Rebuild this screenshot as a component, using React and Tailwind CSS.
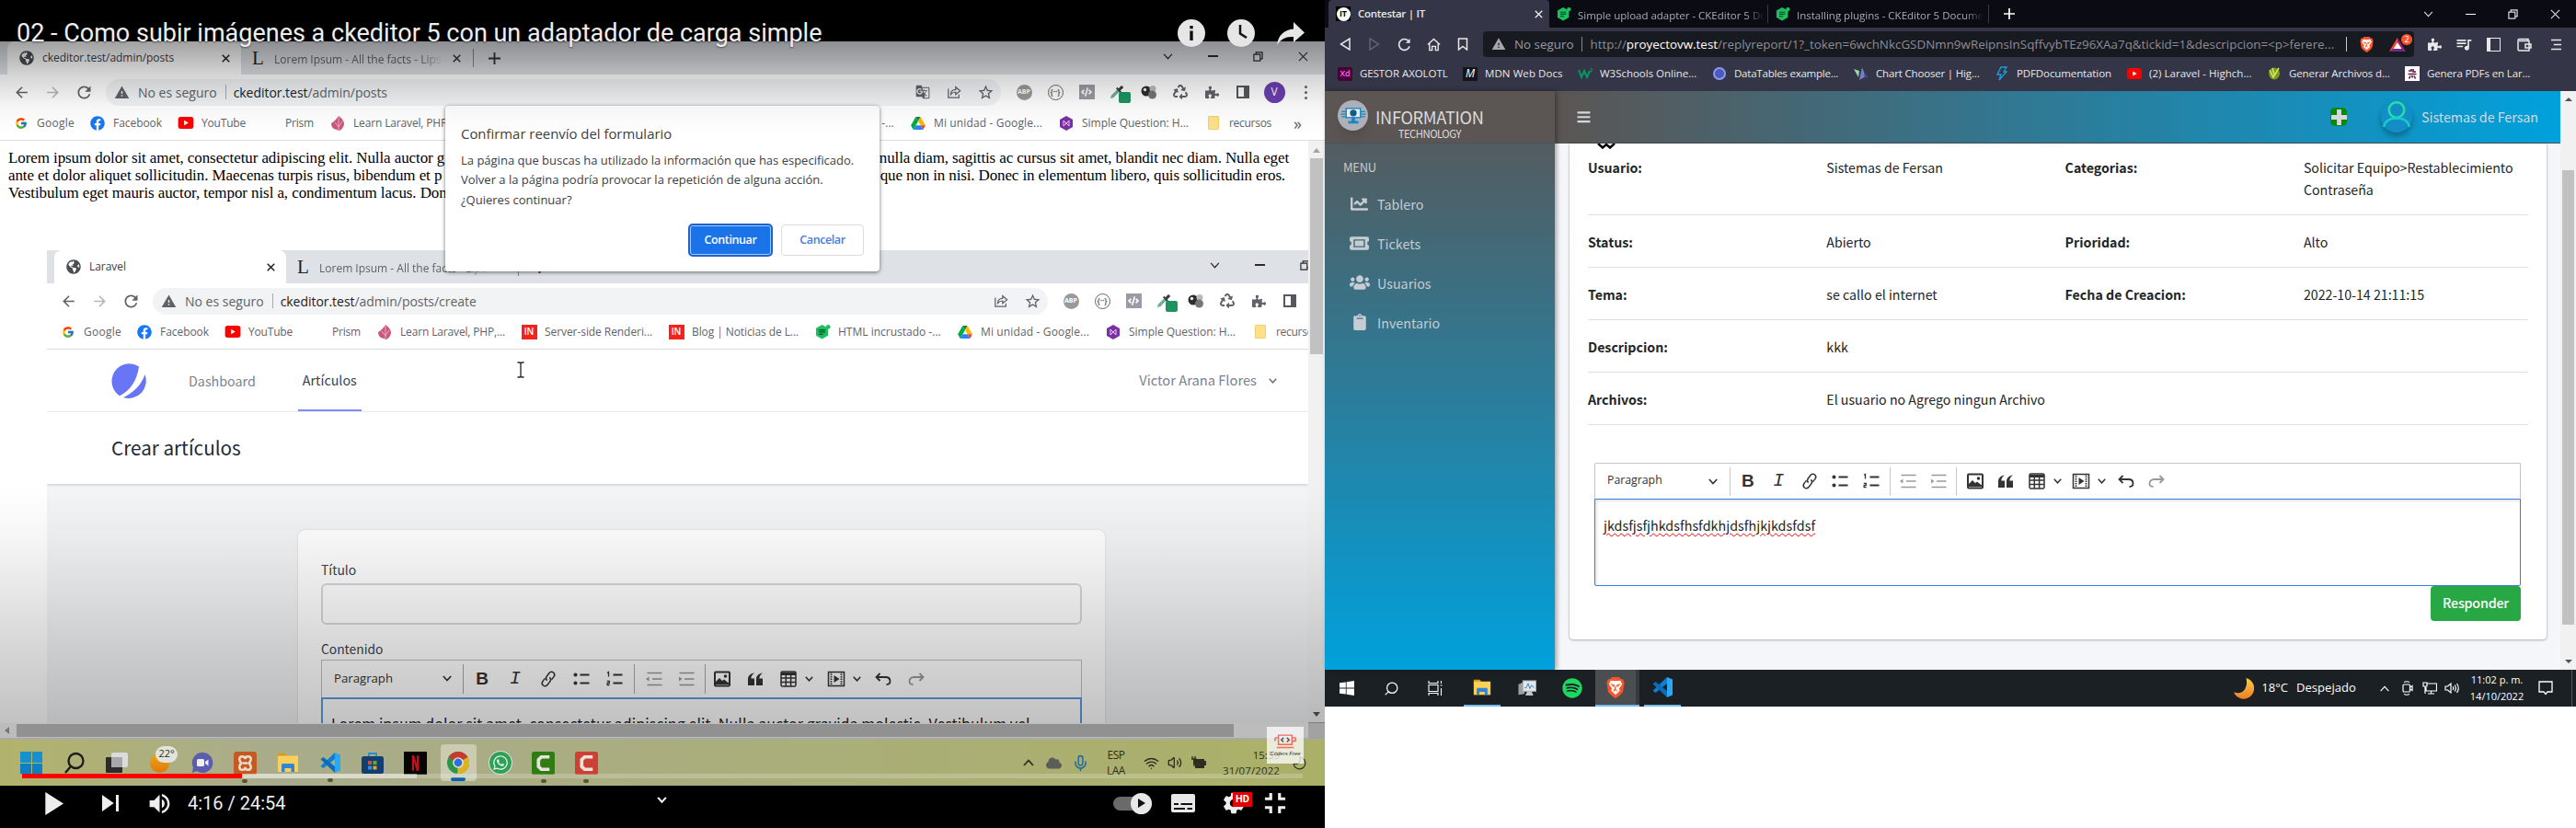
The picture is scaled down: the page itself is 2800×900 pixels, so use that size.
import React from "react";
import {
  FaGlobeAmericas, FaPuzzlePiece, FaRecycle, FaFacebook, FaChartLine, FaUsers, FaClipboard, FaSpotify,
  FaWhatsapp, FaCode, FaEyeDropper, FaCloud,
} from "react-icons/fa";
import { FcGoogle } from "react-icons/fc";
import {
  MdArrowBack, MdArrowForward, MdRefresh, MdWarning, MdSkipNext, MdPlayArrow, MdVolumeUp, MdSettings,
  MdFullscreenExit, MdGTranslate, MdStarBorder, MdOutlineQueueMusic,
} from "react-icons/md";
import { Wifi, Volume2, Mic, Search, Moon } from "lucide-react";

const SEGOE = "font-['Open_Sans','Noto_Sans',sans-serif]";
const SOURCE = "font-['Noto_Sans_CJK_JP','Noto_Sans',sans-serif]";

function T({ c = "", children }) {
  return <span className={`inline-block shrink-0 whitespace-nowrap ${c}`}>{children}</span>;
}

function Box({ c = "", children }) {
  return <div className={`flex shrink-0 items-center justify-center ${c}`}>{children}</div>;
}

/* ---------- small drawings ---------- */

const Chevron = ({ c = "", up = false, sw = 1.6 }) => (
  <svg viewBox="0 0 12 8" className={c} fill="none" stroke="currentColor" strokeWidth={sw}>
    <path d={up ? "M1 7 6 1.5 11 7" : "M1 1 6 6.5 11 1"} />
  </svg>
);
const Close = ({ c = "", sw = 2 }) => (
  <svg viewBox="0 0 12 12" className={c} stroke="currentColor" strokeWidth={sw}><path d="M1 1 11 11M11 1 1 11" /></svg>
);
const Plus = ({ c = "", sw = 2 }) => (
  <svg viewBox="0 0 14 14" className={c} stroke="currentColor" strokeWidth={sw}><path d="M7 0V14M0 7H14" /></svg>
);
const Restore = ({ c = "" }) => (
  <svg viewBox="0 0 12 12" className={c} fill="none" stroke="currentColor" strokeWidth="1.3">
    <path d="M1 3.5H8.5V11H1ZM3.5 3.5V1H11V8.5H8.5" />
  </svg>
);
const ShareBox = ({ c = "" }) => (
  <svg viewBox="0 0 18 18" className={c} fill="none" stroke="currentColor" strokeWidth="1.4">
    <path d="M2 5V16H15V12" /><path d="M11 3V6C7 6 5 9 5 12 7 9.500 9 9 11 9V12L16.500 7.500Z" />
  </svg>
);
const HexDoc = ({ c = "" }) => (
  <svg viewBox="0 0 18 18" className={c}>
    <path d="M8 1 15 5V13.500L8 17.500 1 13.500V5Z" fill="#1bc05e" />
    <circle cx="15" cy="3.500" r="2.500" fill="#1bc05e" />
    <path d="M4.500 7H11.500M4.500 9.500H11.500M4.500 12H9" stroke="#0b4a2a" strokeWidth="1.300" />
  </svg>
);
const YouTube = ({ c = "" }) => (
  <svg viewBox="0 0 18 14" className={c}><rect width="18" height="14" rx="3" fill="#f00" /><path d="M7 4 12 7 7 10Z" fill="#fff" /></svg>
);
const VsCode = ({ c = "" }) => (
  <svg viewBox="0 0 24 24" className={c}>
    <path d="M17 1 23 3.500V20.500L17 23Z" fill="#2aa8f2" />
    <path d="M17 1V8L4.500 18 1.500 15.800Z" fill="#0d7fd0" /><path d="M17 23V16L4.500 6 1.500 8.200Z" fill="#0b6cba" />
  </svg>
);
const Folder = ({ c = "" }) => (
  <svg viewBox="0 0 24 24" className={c}>
    <path d="M1 2H9L11 5H1Z" fill="#d89a1a" /><path d="M1 4.500H23V22H1Z" fill="#fbcf58" />
    <path d="M5 22V14.500Q5 13 6.500 13H17.500Q19 13 19 14.500V22H15.500V18H8.500V22Z" fill="#2f86d6" />
  </svg>
);
const Brave = ({ c = "" }) => (
  <svg viewBox="0 0 20 24" className={c}>
    <path d="M6 0H14L16 2.200 18.500 2.500 20 6 18.500 16Q17 20 10 24 3 20 1.500 16L0 6 1.500 2.500 4 2.200Z" fill="#fb542b" />
    <path d="M10 4.500 15.500 4 17.500 8 14 13 15 15.500 10 20 5 15.500 6 13 2.500 8 4.500 4Z" fill="#fff" />
    <path d="M5 8 8.500 9 8 11ZM15 8 11.500 9 12 11ZM10 10V14.500L7.500 16M10 14.500 12.500 16" fill="#fb542b" stroke="#fb542b" strokeWidth=".9" />
  </svg>
);
const Drive = ({ c = "" }) => (
  <svg viewBox="0 0 18 16" className={c}>
    <path d="M6 0H12L9 5.300Z" fill="#188038" /><path d="M6 0 0 10.500 3 16 9 5.300Z" fill="#00ac47" />
    <path d="M12 0 18 10.500H12L9 5.300Z" fill="#ffba00" /><path d="M3 16 6 10.500H12L15 16Z" fill="#2684fc" /><path d="M12 10.500H18L15 16Z" fill="#ea4335" />
  </svg>
);

/* ---------- rich-text toolbar ---------- */

const ck = {
  link: <path d="M8.500 11.500C7 10 7.300 8.500 8.500 7L11.500 3.800C13 2.300 15 2.300 16.300 3.600 17.600 5 17.500 6.800 16.200 8.300L13.500 11M11.500 8.500C13 10 12.800 11.600 11.500 13L8.500 16.200C7 17.700 5 17.700 3.700 16.400 2.400 15 2.500 13.200 3.800 11.700L6.500 9" transform="rotate(-6 10 10)" />,
  bullets: <><path d="M8.500 5.500H18.500M8.500 14.500H18.500" strokeWidth="1.800" /><circle cx="3.500" cy="5.500" r="1.300" fill="currentColor" /><circle cx="3.500" cy="14.500" r="1.300" fill="currentColor" /></>,
  numbers: <><path d="M8.500 5.500H18.500M8.500 14.500H18.500" strokeWidth="1.800" /><path d="M2 3.500 3.500 2.500V7.500M1.800 12.300H4.300V14.300H2.200V16.500H4.600" strokeWidth="1.300" /></>,
  outdent: <><path d="M2.500 3.500H18.500M8 10H18.500M2.500 16.500H18.500" /><path d="M1 10 4.500 7.500V12.500Z" fill="currentColor" stroke="none" /></>,
  indent: <><path d="M2.500 3.500H18.500M8 10H18.500M2.500 16.500H18.500" /><path d="M5.500 10 2 7.500V12.500Z" fill="currentColor" stroke="none" /></>,
  image: <><rect x="2" y="2.500" width="16" height="15" rx="1" strokeWidth="2" /><path d="M3 16V13L7 9 10 12 12 10.500 17 14.500V16Z" fill="currentColor" stroke="none" /><circle cx="13.500" cy="7" r="1.800" fill="currentColor" stroke="none" /></>,
  quote: <path d="M9 3.500C6.500 5 5.500 7 5.300 9.500H9V17H2V10.500C2 6.500 4.500 4 9 3.500ZM18 3.500C15.500 5 14.500 7 14.300 9.500H18V17H11V10.500C11 6.500 13.500 4 18 3.500Z" fill="currentColor" stroke="none" />,
  table: <><rect x="2" y="2" width="16" height="16" rx="1.500" /><path d="M2 4H18M2 9H18M2 13.500H18M7.300 5V18M12.600 5V18" /><path d="M2 3H18V6H2Z" fill="currentColor" stroke="none" /></>,
  media: <><rect x="1.500" y="2.500" width="17" height="15" strokeWidth="1.500" /><path d="M4.500 2V18M15.500 2V18" strokeWidth="1.800" strokeDasharray="1.500 1" /><path d="M7.500 6 13.500 10 7.500 14Z" fill="currentColor" stroke="none" /></>,
  undo: <path d="M6.500 4 2.500 8 6.500 12M3 8H12.500C16 8 17.500 10 17.500 12.500 17.500 14.500 16 16 13.500 16" strokeWidth="1.800" />,
  redo: <path d="M13.500 4 17.500 8 13.500 12M17 8H7.500C4 8 2.500 10 2.500 12.500 2.500 14.500 4 16 6.500 16" strokeWidth="1.800" />,
};
const Ck = ({ n, c = "" }) => (
  <svg viewBox="0 0 20 20" className={`size-5 ${c}`} fill="none" stroke="currentColor" strokeWidth="1.500">{ck[n]}</svg>
);

function EditorToolbar({ big = false }) {
  const cell = big ? "w-[36px]" : "w-[33.500px]";
  const dd = big ? "w-[16px] pr-2" : "w-[15px] pr-1";
  const sep = big ? "h-8 w-px bg-[#a8a8a8]" : "h-[31px] w-px bg-[#c8c8c8]";
  return (
    <div className={`flex h-full items-center text-[#333] ${SEGOE}`}>
      <div className={`flex items-center justify-between ${big ? "w-[153px] pl-[13px] pr-3" : "w-[146px] pl-[13px] pr-[13px]"}`}>
        <T c={big ? "pb-px text-[13.200px]" : "pb-px text-[12.300px]"}>Paragraph</T>
        <Chevron c="h-[7px] w-2.5" sw={2} />
      </div>
      <div className={sep} />
      <Box c={`${cell} ml-0.5`}><span className="font-['Liberation_Sans',sans-serif] text-[19px] font-bold">B</span></Box>
      <Box c={cell}><span className="font-['Liberation_Mono',monospace] text-[20px] italic">I</span></Box>
      <Box c={cell}><Ck n="link" /></Box>
      <Box c={cell}><Ck n="bullets" /></Box>
      <Box c={cell}><Ck n="numbers" /></Box>
      <div className={`${sep} ml-[3px]`} />
      <Box c={`${cell} ml-[3px] text-[#999]`}><Ck n="outdent" /></Box>
      <Box c={`${big ? "w-[34px]" : "w-[32px]"} text-[#999]`}><Ck n="indent" /></Box>
      <div className={`${sep} ml-[3px]`} />
      <Box c={`${cell} ${big ? "" : "ml-[3px]"}`}><Ck n="image" /></Box>
      <Box c={cell}><Ck n="quote" /></Box>
      <Box c={cell}><Ck n="table" /></Box>
      <Box c={dd}><Chevron c="h-[6px] w-[9px] shrink-0" sw={2} /></Box>
      <Box c={cell}><Ck n="media" /></Box>
      <Box c={dd}><Chevron c="h-[6px] w-[9px] shrink-0" sw={2} /></Box>
      <Box c={`${cell} ${big ? "-ml-px" : ""}`}><Ck n="undo" /></Box>
      <Box c={`${cell} text-[#999]`}><Ck n="redo" /></Box>
    </div>
  );
}

/* ---------- light browser ---------- */

const IN = () => <div className="flex h-4 w-[17px] items-center justify-center bg-[#f4221b] text-[10px] font-semibold text-white">IN</div>;

const marks = [
  { s: "w-[83px] tracking-[0.26px]", t: "Google", i: <FcGoogle className="size-[14px]" /> },
  { s: "w-[96px] tracking-[-0.05px]", t: "Facebook", i: <FaFacebook className="size-4 text-[#1877f2]" /> },
  { s: "w-[91px] tracking-[-0.19px]", t: "YouTube", i: <YouTube c="h-[13px] w-[18px]" /> },
  { s: "w-[74px] tracking-[-0.2px]", t: "Prism", i: null },
  { s: "w-[157px] tracking-[-0.15px]", t: "Learn Laravel, PHP,...", i: <svg viewBox="0 0 14 16" className="h-4 w-3.5"><path d="M8 0Q14 4 14 9 13 14 9 16L3 14Q0 12 0 8 4 6 8 0Z" fill="#c9587f" /><path d="M8 1V15M4 7 8 12 12 6" stroke="#f0aac0" fill="none" /></svg> },
  { s: "w-[160px] tracking-[-0.07px]", t: "Server-side Renderi...", i: <IN /> },
  { s: "w-[159px] tracking-[-0.09px]", t: "Blog | Noticias de L...", i: <IN /> },
  { s: "w-[155px]", t: "HTML incrustado -...", i: <HexDoc c="size-[17px]" /> },
  { s: "w-[161px] tracking-[0.14px]", t: "Mi unidad - Google...", i: <Drive c="h-[14px] w-4" /> },
  { s: "w-[160px] tracking-[-0.03px]", t: "Simple Question: H...", i: <svg viewBox="0 0 16 16" className="size-4"><path d="M8 0 15 4V12L8 16 1 12V4Z" fill="#7b2fa5" /><path d="M5 5 8 8 11 5M5 11 8 8 11 11M5 5V11M11 5V11" stroke="#e9c9f7" fill="none" /></svg> },
  { s: "w-[96px] tracking-[-0.29px]", t: "recursos", i: <div className="h-[15px] w-3 rounded-[1px] border border-[#f0cf73] bg-[#ffe08a]" /> },
];

function LightBrowser({ title, path, tab, translate }) {
  return (
    <div className={`w-[1440px] shrink-0 text-[#5f6368] ${SEGOE}`}>
      <div className="flex h-9 items-center bg-[#dee1e6]">
        <div className={`ml-2 flex h-9 items-center rounded-t-lg bg-white pl-[13px] pr-3 text-[#3c4043] ${tab}`}>
          <FaGlobeAmericas className="size-4 shrink-0 text-[#4b4f54]" />
          <T c="ml-[9px] text-[12px] tracking-[-0.05px]">{title}</T>
          <Close c="ml-auto size-[9px] text-[#222]" />
        </div>
        <div className="flex h-9 w-[252px] items-center">
          <span className="ml-3 w-6 shrink-0 font-['Liberation_Serif',serif] text-[21px] leading-none text-[#222]">L</span>
          <div className="w-[184px] overflow-hidden [mask-image:linear-gradient(to_right,#000_86%,transparent)]">
            <T c="text-[12px]">Lorem Ipsum - All the facts - Lips</T>
          </div>
          <Close c="ml-2.5 size-[9px] shrink-0 text-[#333]" />
        </div>
        <div className="h-5 w-px bg-[#85888d]" />
        <Plus c="ml-4 size-[13px] text-[#333]" />
        <div className="-mr-px mb-1 ml-auto flex text-[#2b2b2b]">
          <Box c="w-[49px]"><Chevron c="h-[7px] w-[11px]" sw={1.5} /></Box>
          <Box c="w-[49px]"><div className="h-[1.500px] w-[11px] bg-current" /></Box>
          <Box c="w-[49px]"><Restore c="size-[11px]" /></Box>
          <Box c="w-[49px]"><Close c="size-[11px]" sw={1.2} /></Box>
        </div>
      </div>
      <div className="flex h-[38px] items-center bg-white pl-[6px]">
        <Box c="w-[34px]"><MdArrowBack className="size-[19px]" /></Box>
        <Box c="w-[34px] text-[#b4b6b9]"><MdArrowForward className="size-[19px]" /></Box>
        <Box c="w-[34px]"><MdRefresh className="size-[21px]" /></Box>
        <div className="ml-[7px] flex h-[29px] w-[973px] items-center rounded-full bg-[#f1f3f4]">
          <Box c="w-[35px]"><MdWarning className="size-[17px]" /></Box>
          <T c="text-[14px]">No es seguro</T>
          <div className="ml-[9px] mr-2 h-4 w-px bg-[#a9abae]" />
          <T c="text-[14px] tracking-[-0.04px]"><span className="text-[#202124]">ckeditor.test</span>{path}</T>
          <div className="ml-auto flex">
            {translate && <Box c="w-[34px]"><MdGTranslate className="size-4" /></Box>}
            <Box c="w-[34px]"><ShareBox c="size-4" /></Box>
            <Box c="w-[34px]"><MdStarBorder className="size-[19px]" /></Box>
          </div>
        </div>
        <div className="ml-2 flex">
          <Box c="w-[34px]"><div className="flex size-[17px] items-center justify-center rounded-full bg-[#999] text-[7px] font-bold text-white">ABP</div></Box>
          <Box c="w-[34px]"><div className="flex size-[17px] items-center justify-center rounded-full border-[1.500px] border-[#666] text-[8px] font-bold leading-none">{"{··}"}</div></Box>
          <Box c="w-[34px]"><div className="flex h-4 w-[17px] items-center justify-center bg-[#9a9ba3] text-white"><FaCode className="size-3" /></div></Box>
          <Box c="relative w-[34px]">
            <svg viewBox="0 0 18 18" className="mr-1 size-[17px]"><path d="M2 16 3 12.500 10 5.500 12.500 8 5.500 15Z" fill="#6fae93" /><path d="M8.500 4.500 10 3 11.500 4.500 14 1.500Q16.500 .5 17 3.500L13.500 7 15 8.500 13.500 10Z" fill="#3b3d40" /></svg>
            <div className="absolute left-[18px] top-[11px] h-3 w-[13px] rounded-[2px] bg-[#1f9461]" />
          </Box>
          <Box c="w-[34px]"><svg viewBox="0 0 18 16" className="h-4 w-[18px]"><circle cx="6" cy="7" r="5.500" fill="#2d2d2d" /><circle cx="4.500" cy="5.500" r="1.700" fill="#eee" /><circle cx="13" cy="4.500" r="3.500" fill="#bbb" /><circle cx="12.500" cy="11" r="4.500" fill="#777" /></svg></Box>
          <Box c="w-[34px]"><FaRecycle className="size-4" /></Box>
          <Box c="w-[34px]"><FaPuzzlePiece className="size-[15px]" /></Box>
          <Box c="w-[34px]"><div className="size-[14px] border-2 border-r-[6px] border-[#55585c]" /></Box>
          <Box c="w-[34px]"><div className="flex size-[23px] items-center justify-center rounded-full bg-[#6b3fb0] text-[12px] text-white">V</div></Box>
          <Box c="w-[34px] flex-col gap-[3px]"><i className="size-[3px] rounded-full bg-current" /><i className="size-[3px] rounded-full bg-current" /><i className="size-[3px] rounded-full bg-current" /></Box>
        </div>
      </div>
      <div className="flex h-[34px] items-center border-b border-[#dcdcdc] bg-white pb-1 pl-3.5">
        {marks.map((m) => (
          <div key={m.t} className={`flex shrink-0 items-center ${m.s}`}>
            <Box c="mr-2 w-[18px]">{m.i}</Box>
            <T c="text-[12px]">{m.t}</T>
          </div>
        ))}
        <span className="text-[18px] leading-none">»</span>
      </div>
    </div>
  );
}

/* ---------- video player ---------- */

function ArticlePage() {
  return (
    <div className="ml-[51px] h-[514px] w-[1371px] overflow-hidden bg-[#f3f4f6]">
      <LightBrowser title="Laravel" path="/admin/posts/create" tab="w-[252px]" />
      <div className={`flex h-[68px] w-[1371px] items-center border-b border-[#eef0f2] bg-white pl-[70px] ${SOURCE}`}>
        <svg viewBox="0 0 38 38" className="size-[38px]">
          <path d="M30 3.500A19 19 0 1 0 9 35.200C20 30 28 19 30 3.500Z" fill="#6875f5" /><path d="M36.500 12A19 19 0 0 1 13 37C24 32 33 23 36.500 12Z" fill="#6875f5" />
        </svg>
        <T c="ml-[46px] text-[14.300px] text-[#7b8290]">Dashboard</T>
        <div className="ml-[46px] flex h-full w-[69px] items-center justify-center border-b-2 border-[#818cf8]">
          <T c="text-[14.300px] text-[#3a414d]">Artículos</T>
        </div>
        <T c="ml-auto text-[14.700px] text-[#7b8290]">Victor Arana Flores</T>
        <Chevron c="ml-[13px] mr-[34px] h-[6px] w-[9px] text-[#6b7280]" sw={2} />
      </div>
      <div className={`flex h-[78px] items-center bg-white pl-[70px] shadow-[0_1px_3px_rgba(0,0,0,.18)] ${SOURCE}`}>
        <T c="text-[20.700px] text-[#1f2937]">Crear artículos</T>
      </div>
      <div className={`ml-[273px] mt-[50px] h-[230px] w-[877px] rounded-t-lg bg-white px-[25px] pt-[30px] shadow-[0_0_3px_rgba(0,0,0,.12)] ${SOURCE}`}>
        <div className="h-[28px]"><T c="text-[13.900px] leading-[22px] text-[#374151]">Título</T></div>
        <div className="h-[45px] rounded-md border-2 border-[#d5d7db]" />
        <div className="h-[38px] pt-[13px]"><T c="text-[13.800px] leading-[22px] text-[#374151]">Contenido</T></div>
        <div className="h-[41px] border border-b-0 border-[#bfbfbf]"><EditorToolbar big /></div>
        <div className="h-[60px] border-2 border-[#5a9be0] pl-[9px] pt-[14px]">
          <T c="text-[16px] leading-5 tracking-[0.07px] text-[#222]">Lorem ipsum dolor sit amet, consectetur adipiscing elit. Nulla auctor gravida molestie. Vestibulum vel</T>
        </div>
      </div>
    </div>
  );
}

function ResubmitDialog() {
  return (
    <div className={`absolute left-[484px] top-[115px] flex h-[180px] w-[472px] flex-col rounded bg-white px-[17px] pt-[20px] text-[#3c4043] shadow-[0_1px_4px_rgba(0,0,0,.55)] ${SEGOE}`}>
      <T c="text-[14.900px] leading-5">Confirmar reenvío del formulario</T>
      <div className="mt-[9px] flex flex-col items-start text-[13px] leading-[21.300px]">
        <T>La página que buscas ha utilizado la información que has especificado.</T>
        <T>Volver a la página podría provocar la repetición de alguna acción.</T>
        <T>¿Quieres continuar?</T>
      </div>
      <div className="ml-auto mt-[15px] flex items-center gap-[9px] text-[12.500px] font-semibold tracking-[-0.4px]">
        <div className="flex h-9 w-[92px] items-center justify-center rounded-[5px] border-2 border-[#1a63d0] bg-[#1a73e8] text-white shadow-[inset_0_0_0_1px_#a9c8f5]"><T>Continuar</T></div>
        <div className="flex h-[34px] w-[90px] items-center justify-center rounded border border-[#dadce0] text-[#4a7be0]"><T>Cancelar</T></div>
      </div>
    </div>
  );
}

function Win11Taskbar() {
  const cell = "w-[46.400px] relative";
  const dot = <div className="absolute -bottom-[9px] h-1 w-[6px] rounded-full bg-[#55582f]" />;
  return (
    <div className={`flex h-[50px] items-center bg-linear-to-r/srgb from-[#b1b36c] via-[#a9ac8b] via-20% to-[#abb068] pl-[11px] text-[#2c2e20] ${SEGOE}`}>
      <Box c={cell}><div className="grid size-6 grid-cols-2 gap-px"><i className="bg-[#1691cf]" /><i className="bg-[#1691cf]" /><i className="bg-[#0b80c4]" /><i className="bg-[#0b80c4]" /></div></Box>
      <Box c={cell}><svg viewBox="0 0 24 24" className="size-6" fill="none" stroke="#1c1c1c" strokeWidth="2.300"><circle cx="13.500" cy="10" r="8" /><path d="M8 16 2 23" /></svg></Box>
      <Box c={cell}><svg viewBox="0 0 26 24" className="h-6 w-[26px]"><rect x="7" y="1" width="18" height="16" rx="2" fill="#dcdcdc" /><rect x="1" y="6" width="18" height="17" rx="1" fill="#2c2c2e" /><rect x="7" y="6" width="12" height="11" fill="#a8a8aa" /></svg></Box>
      <Box c={cell}>
        <div className="size-[21px] rounded-full bg-linear-to-b from-[#f2a617] to-[#d97a0c]" />
        <div className="absolute -top-[8px] left-[19px] flex h-[18px] w-6 items-center justify-center rounded-full bg-[#e4e4dc] text-[11px]">22°</div>
      </Box>
      <Box c={cell}><svg viewBox="0 0 24 24" className="size-6"><path d="M12 1A11 11 0 1 1 6 21L1 23 2 17A11 11 0 0 1 12 1Z" fill="#5a5cae" /><rect x="6" y="8" width="8" height="8" rx="1.500" fill="#eee" /><path d="M15 11 18.500 8.500V15.500L15 13Z" fill="#eee" /></svg></Box>
      <Box c={cell}><svg viewBox="0 0 24 24" className="size-[25px]"><rect width="24" height="24" rx="3" fill="#c25a21" /><path d="M12 8Q12 5 9 5 6 5 6 8 6 10 8 12 6 14 6 16 6 19 9 19 12 19 12 16 12 19 15 19 18 19 18 16 18 14 16 12 18 10 18 8 18 5 15 5 12 5 12 8M9.500 12H14.500" fill="none" stroke="#ecdccd" strokeWidth="2.400" /></svg>{dot}</Box>
      <Box c={cell}><Folder c="h-6 w-[26px]" /></Box>
      <Box c={cell}><VsCode c="size-6" />{dot}</Box>
      <Box c={cell}><svg viewBox="0 0 24 24" className="size-6"><path d="M8 6V2H16V6" fill="none" stroke="#2a8fd0" strokeWidth="1.800" /><rect y="5" width="24" height="19" rx="2.500" fill="#123f70" /><path d="M7 10H11V14H7Z" fill="#d5502f" /><path d="M12.500 10H16.500V14H12.500Z" fill="#6da534" /><path d="M7 15.500H11V19.500H7Z" fill="#2a93d4" /><path d="M12.500 15.500H16.500V19.500H12.500Z" fill="#dba822" /></svg></Box>
      <Box c={cell}><svg viewBox="0 0 24 24" className="size-[25px]"><rect width="24" height="24" fill="#050505" /><path d="M9.500 20V4L14.500 20V4" fill="none" stroke="#c11119" strokeWidth="2.200" /></svg></Box>
      <Box c={cell}>
        <div className="flex h-10 w-[39px] items-center justify-center rounded bg-[#c9ccb1]">
          <svg viewBox="0 0 24 24" className="size-6"><circle cx="12" cy="12" r="12" fill="#2d9548" /><path d="M12 12 1.600 6A12 12 0 0 1 22.400 6Z" fill="#c93a2e" /><path d="M12 12 22.400 6A12 12 0 0 1 11 24Z" fill="#dfb31d" /><circle cx="12" cy="12" r="5.800" fill="#e8e8dc" /><circle cx="12" cy="12" r="4.400" fill="#2f6fd6" /></svg>
        </div>
        <div className="absolute bottom-0 h-1 w-4 rounded-full bg-[#0a5fb4]" />
      </Box>
      <Box c={cell}><div className="flex size-6 items-center justify-center rounded-full bg-[#2ba254] text-[#eee] ring-1 ring-[#ddd]"><FaWhatsapp className="size-[18px]" /></div></Box>
      <Box c={cell}><svg viewBox="0 0 24 24" className="size-[25px]"><rect width="24" height="24" rx="2.500" fill="#2f7d12" /><path d="M18.500 5.500H10L7 8.500V15.500L10 18.500H18.500" fill="none" stroke="#e4e4da" strokeWidth="3.500" /></svg>{dot}</Box>
      <Box c={cell}><svg viewBox="0 0 24 24" className="size-[25px]"><rect width="24" height="24" rx="2.500" fill="#cc4136" /><path d="M18.500 5.500H10L7 8.500V15.500L10 18.500H18.500" fill="none" stroke="#e4e4da" strokeWidth="3.500" /></svg>{dot}</Box>
      <div className="ml-auto flex h-full items-center">
        <Box c="w-[26px]"><Chevron up c="h-2 w-3" sw={1.8} /></Box>
        <Box c="w-[28px]"><FaCloud className="size-[17px] text-[#5b5d58]" /></Box>
        <Box c="w-[30px]"><Mic className="size-[19px] text-[#2d6b9c]" /></Box>
        <div className="ml-[13px] flex w-[22px] flex-col items-center text-[12px] leading-[17px] tracking-[-0.5px]"><T>ESP</T><T>LAA</T></div>
        <Box c="ml-[14px] w-[26px]"><Wifi className="size-[17px]" /></Box>
        <Box c="w-[26px]"><Volume2 className="size-4" /></Box>
        <Box c="w-[26px]"><svg viewBox="0 0 18 14" className="h-3.5 w-[18px]"><path d="M3 3H15V5H17V10H15V13H5V9H3Z" fill="currentColor" /><path d="M2 0V3M5 0V3M1 3H6V6L4 8V11" fill="none" stroke="currentColor" strokeWidth="1.300" /></svg></Box>
        <div className="ml-[11px] flex w-[64px] flex-col items-end text-[11.500px] leading-[17px]"><T>15:39</T><T c="tracking-[0.1px]">31/07/2022</T></div>
        <Box c="ml-[7px] mr-[14px] w-7"><Moon className="size-[17px] -rotate-90" strokeWidth={1.6} /></Box>
      </div>
    </div>
  );
}

function VideoPlayer() {
  return (
    <div className="relative flex h-[900px] w-[1440px] shrink-0 flex-col bg-black pt-[45px]">
      <LightBrowser title="ckeditor.test/admin/posts" path="/admin/posts" tab="w-[254px]" translate />
      <div className="flex h-[633px]">
        <div className="w-[1422px] overflow-hidden bg-white">
          <div className="h-[119px] pl-[9px] pr-[21px] pt-[9px] font-['Liberation_Serif',serif] text-[17px] leading-[19px] tracking-[-0.09px] text-black">
            <div className="flex justify-between"><T>Lorem ipsum dolor sit amet, consectetur adipiscing elit. Nulla auctor g</T><T c="tracking-[-0.13px]">nulla diam, sagittis ac cursus sit amet, blandit nec diam. Nulla eget</T></div>
            <div className="flex justify-between pr-1"><T>ante et dolor aliquet sollicitudin. Maecenas turpis risus, bibendum et p</T><T c="tracking-[-0.13px]">que non in nisi. Donec in elementum libero, quis sollicitudin eros.</T></div>
            <T>Vestibulum eget mauris auctor, tempor nisl a, condimentum lacus. Don</T>
          </div>
          <ArticlePage />
        </div>
        <div className="flex w-[18px] flex-col items-center bg-[#f1f1f1] pt-2">
          <div className="size-0 border-x-4 border-b-[5px] border-x-transparent border-b-[#a3a3a3]" />
          <div className="mt-1.5 h-[213px] w-3.5 bg-[#c1c1c1]" />
          <div className="mb-[7px] mt-auto size-0 border-x-4 border-t-[5px] border-x-transparent border-t-[#555]" />
        </div>
      </div>
      <div className="flex h-[18px] items-center border-b-2 border-[#a9aaa4] bg-[#bcbcbc] pl-[5px]">
        <div className="size-0 border-y-4 border-r-[5px] border-y-transparent border-r-[#777]" />
        <div className="ml-2 h-[14px] w-[1323px] bg-[#929191]" />
        <div className="ml-auto h-[18px] w-[18px] bg-[#a2a2a2]" />
      </div>
      <Win11Taskbar />
      <ResubmitDialog />

      <div className="pointer-events-none absolute inset-x-0 top-[45px] h-[100px] bg-[linear-gradient(to_bottom,rgba(0,0,0,.37),rgba(0,0,0,.17)_36%,rgba(0,0,0,.04)_70%,transparent)]" />
      <div className="pointer-events-none absolute inset-x-0 top-[530px] h-[256px] bg-[linear-gradient(to_bottom,transparent,rgba(0,0,0,.04)_22%,rgba(0,0,0,.1)_47%,rgba(0,0,0,.16)_68%,rgba(0,0,0,.24))]" />

      <div className="absolute left-[562px] top-[393px]">
        <svg viewBox="0 0 8 18" className="h-[18px] w-2" fill="none" stroke="#222" strokeWidth="1.300"><path d="M.5 1H3L4 2 5 1H7.500M.5 17H3L4 16 5 17H7.500M4 2V16" /></svg>
      </div>

      <div className="absolute inset-x-0 top-0 flex h-[72px] items-center pl-[18px] pr-[22px] font-['Roboto',sans-serif] text-[#eee]">
        <T c="text-[27px] [text-shadow:0_1px_2px_rgba(0,0,0,.5)]">02 - Como subir imágenes a ckeditor 5 con un adaptador de carga simple</T>
        <div className="ml-auto flex items-center">
          <svg viewBox="0 0 30 30" className="mr-6 size-[30px]"><circle cx="15" cy="15" r="15" fill="#e6e6e6" /><path d="M13.300 12.500H16.700V23H13.300ZM13.300 7H16.700V10.200H13.300Z" fill="#111" /></svg>
          <svg viewBox="0 0 30 30" className="mr-6 size-[30px]"><circle cx="15" cy="15" r="15" fill="#e6e6e6" /><path d="M14 6V15.500L21 20" fill="none" stroke="#111" strokeWidth="2.500" /></svg>
          <svg viewBox="0 0 30 25" className="h-[25px] w-[30px]"><path d="M18 0 30 11.500 18 22V16Q6 15 0 25 2 9 18 7.500Z" fill="#e6e6e6" /></svg>
        </div>
      </div>

      <div className="absolute left-[1377px] top-[790px] flex h-10 w-10 flex-col items-center bg-white/75 pt-2">
        <svg viewBox="0 0 26 18" className="h-[17px] w-6" fill="none" stroke="#ef6a5f" strokeWidth="1.600"><path d="M5 1H21V12H5ZM3 15.500H23M1 4H5M21 4H25V8H21M1 4V8" /><path d="M11 4 8.500 6.500 11 9M15 4 17.500 6.500 15 9" stroke="#555" /></svg>
        <span className="font-['Liberation_Sans',sans-serif] text-[6px] italic leading-[8px] text-[#333]">Coders Free</span>
      </div>

      <div className="absolute left-6 top-[841px] flex h-[5px] w-[1392px] bg-white/20">
        <div className="w-[238.500px] bg-[#f00]" />
        <div className="w-[190px] bg-white/45" />
      </div>

      <div className="flex h-[38px] items-center pl-[35px] pr-[35px] font-['Roboto',sans-serif] text-[#eee]">
        <MdPlayArrow className="size-[43px]" />
        <MdSkipNext className="ml-[24px] size-[36px]" />
        <MdVolumeUp className="ml-[21px] size-[29px]" />
        <T c="ml-[16px] text-[20px]">4:16 / 24:54</T>
        <Chevron c="mb-2 ml-[403px] h-[7px] w-[11px]" sw={2.4} />
        <div className="ml-auto flex items-center">
          <div className="flex h-[15px] w-[42px] items-center justify-end rounded-full bg-[#6a6a6a]">
            <div className="flex size-[23px] shrink-0 items-center justify-center rounded-full bg-[#e8e8e8]"><svg viewBox="0 0 8 10" className="h-2.5 w-2"><path d="M0 0 8 5 0 10Z" fill="#111" /></svg></div>
          </div>
          <svg viewBox="0 0 26 20" className="ml-[21px] h-5 w-[26px]"><rect width="26" height="20" rx="2" fill="#e8e8e8" /><path d="M3 11H8M10.500 11H23M3 16H15M17.500 16H23" stroke="#111" strokeWidth="2.200" /></svg>
          <div className="relative ml-[28px] h-7 w-[34px]">
            <MdSettings className="size-7" />
            <div className="absolute left-[13px] top-[2px] flex h-4 w-[21px] items-center justify-center bg-[#e60000] text-[11px] font-bold text-white">HD</div>
          </div>
          <MdFullscreenExit className="ml-[6px] size-[38px]" />
        </div>
      </div>
    </div>
  );
}

/* ---------- dark browser ---------- */

const darkMarks = [
  { s: "w-[136px] tracking-[-0.07px]", t: "GESTOR AXOLOTL", i: <div className="flex h-[15px] w-4 items-center justify-center rounded-[2px] bg-[#470137] text-[9px] font-semibold text-[#ff61f6]">Xd</div> },
  { s: "w-[125px] tracking-[0.08px]", t: "MDN Web Docs", i: <div className="flex h-[15px] w-4 items-center justify-center bg-[#15141a] text-[12px] italic text-white">M</div> },
  { s: "w-[146px] tracking-[-0.02px]", t: "W3Schools Online...", i: <svg viewBox="0 0 16 12" className="h-3 w-4" fill="none" stroke="#059862" strokeWidth="2"><path d="M1 2 4 10 7 3 10 10 13 3" /><path d="M13 0H15V4H13" strokeWidth="1" /></svg> },
  { s: "w-[154px] tracking-[-0.22px]", t: "DataTables example...", i: <div className="size-[14px] rounded-full border-2 border-[#8f9be8] bg-[#4a58c0]" /> },
  { s: "w-[153px] tracking-[-0.17px]", t: "Chart Chooser | Hig...", i: <svg viewBox="0 0 16 14" className="h-3.5 w-4"><path d="M0 2 6 4 5 11Z" fill="#8fe0a0" /><path d="M9 0 13 10 6 14Z" fill="#7b7bc9" /><path d="M11 5 16 11 12 12Z" fill="#3b4a8c" /></svg> },
  { s: "w-[144px] tracking-[-0.11px]", t: "PDFDocumentation", i: <svg viewBox="0 0 12 16" className="h-4 w-3" fill="none" stroke="#1a9fe0" strokeWidth="1.300"><path d="M5 1H11L8 6H11L3 15 5 9H1Z" /></svg> },
  { s: "w-[152px] tracking-[0.03px]", t: "(2) Laravel - Highch...", i: <YouTube c="h-[12px] w-4" /> },
  { s: "w-[150px] tracking-[-0.1px]", t: "Generar Archivos d...", i: <svg viewBox="0 0 14 14" className="size-3.5"><ellipse cx="7" cy="7" rx="6" ry="6.500" fill="#7d9a1e" /><path d="M2 3 6 11 12 1M5 1 7 8" stroke="#d6e86a" strokeWidth="1.500" fill="none" /></svg> },
  { s: "w-[130px] tracking-[-0.12px]", t: "Genera PDFs en Lar...", i: <svg viewBox="0 0 16 16" className="size-4"><rect width="16" height="16" fill="#fff" /><path d="M4 5H7V3M9 3V6H12M3.500 8.500H12.500M6 10.500 4.500 13.500M8 10V12.500M10 10.500 11.500 13.500" fill="none" stroke="#5a1b3c" strokeWidth="1.600" /></svg> },
];

function DarkTab({ s, children }) {
  return (
    <div className={`flex h-5 items-center border-r border-[#3a3b45] pl-2 ${s}`}>
      <HexDoc c="size-4 shrink-0" />
      <div className="ml-[7px] w-[203px] overflow-hidden text-[#a9abb3] [mask-image:linear-gradient(to_right,#000_90%,transparent)]"><T c="text-[11.500px] tracking-[-0.01px]">{children}</T></div>
    </div>
  );
}

function DarkChrome() {
  return (
    <div className={`text-[#e8e8ea] ${SEGOE}`}>
      <div className="flex h-[30px] items-center bg-[#0b0b14] pl-1">
        <div className="flex h-[30px] w-[240px] items-center rounded-t-[4px] bg-[#343546] pl-2 pr-[7px]">
          <div className="flex size-4 items-center justify-center bg-black"><div className="flex size-[15px] items-center justify-center rounded-full bg-white text-[9px] font-bold text-black">IT</div></div>
          <T c="ml-2 text-[11.500px] font-semibold tracking-[-0.28px]">Contestar | IT</T>
          <Close c="ml-auto size-[9px]" sw={1.8} />
        </div>
        <DarkTab s="w-[238px]">Simple upload adapter - CKEditor 5 Dc</DarkTab>
        <DarkTab s="w-[240px]">Installing plugins - CKEditor 5 Docume</DarkTab>
        <Plus c="ml-4 size-3 text-white" />
        <div className="ml-auto flex text-[#ddd]">
          <Box c="w-[46px]"><Chevron c="h-[7px] w-[11px]" sw={1.2} /></Box>
          <Box c="w-[46px]"><div className="h-px w-[11px] bg-white" /></Box>
          <Box c="w-[46px]"><Restore c="size-[11px]" /></Box>
          <Box c="w-[46px]"><Close c="size-[11px]" sw={1.2} /></Box>
        </div>
      </div>
      <div className="flex h-9 items-center bg-[#343546] pl-1.5">
        <Box c="w-8"><svg viewBox="0 0 12 14" className="h-3.5 w-3" fill="none" stroke="currentColor" strokeWidth="1.500"><path d="M11 1V13L1.500 7Z" /></svg></Box>
        <Box c="w-8 text-[#6b6c7a]"><svg viewBox="0 0 12 14" className="h-3.5 w-3" fill="none" stroke="currentColor" strokeWidth="1.300"><path d="M1 1V13L10.500 7Z" /></svg></Box>
        <Box c="w-8"><svg viewBox="0 0 16 16" className="size-[15px]" fill="none" stroke="currentColor" strokeWidth="1.700"><path d="M14 10A6.300 6.300 0 1 1 12.500 3.500" /><path d="M14.500 1V6H9.500Z" fill="currentColor" stroke="none" /></svg></Box>
        <Box c="w-8"><svg viewBox="0 0 16 16" className="size-[15px]" fill="none" stroke="currentColor" strokeWidth="1.500"><path d="M1 8 8 1.500 15 8M3 7V14.500H6V10H10V14.500H13V7" /></svg></Box>
        <Box c="w-8"><svg viewBox="0 0 12 14" className="h-3.5 w-3" fill="none" stroke="currentColor" strokeWidth="1.500"><path d="M1.500 1H10.500V13L6 9.500 1.500 13Z" /></svg></Box>
        <div className="ml-1.5 flex h-7 w-[1012px] shrink-0 items-center rounded bg-[#181a21] text-[13.400px] text-[#8c8d96]">
          <Box c="w-[34px] text-[#a6a7ae]"><MdWarning className="size-4" /></Box>
          <T c="text-[#9a9ba3]">No seguro</T>
          <div className="ml-2 mr-[9px] h-4 w-px bg-[#85868e]" />
          <T>http://<span className="text-white">proyectovw.test</span>/replyreport/1?_token=6wchNkcGSDNmn9wReipnsInSqffvybTEz96XAa7q&amp;tickid=1&amp;descripcion=&lt;p&gt;ferere...</T>
          <div className="ml-auto mr-1 h-4 w-px bg-[#c9cad0]" />
          <Box c="w-[34px]"><Brave c="h-[17px] w-[15px]" /></Box>
          <Box c="relative mr-[1px] w-[34px]">
            <svg viewBox="0 0 18 15" className="h-[15px] w-[18px]"><path d="M9 0 18 15H0Z" fill="#9e1f63" /><path d="M9 0V5L4.500 12 0 15Z" fill="#ff4724" /><path d="M0 15 4.500 12H13.500L18 15Z" fill="#662d91" /><path d="M9 5 13.500 12H4.500Z" fill="#fff" /></svg>
            <div className="absolute -top-[4px] left-[21px] flex h-3 w-3 items-center justify-center rounded-full bg-[#fb542b] text-[9px] text-white">2</div>
          </Box>
        </div>
        <div className="ml-[6px] flex">
          <Box c="w-[32px]"><FaPuzzlePiece className="size-[15px]" /></Box>
          <Box c="w-[32px]"><MdOutlineQueueMusic className="size-[20px]" /></Box>
          <Box c="w-[33px]"><div className="size-[15px] border-[1.500px] border-l-[4px] border-[#e8e8ea]" /></Box>
          <Box c="w-[34px]"><svg viewBox="0 0 16 15" className="h-[15px] w-4" fill="none" stroke="currentColor" strokeWidth="1.500"><path d="M12 3.500V1.500H2.500Q1 1.500 1 3V12Q1 14 2.500 14H13V3.500H2M15 7H9V11H15Z" /></svg></Box>
          <Box c="w-[34px]"><svg viewBox="0 0 12 13" className="h-[13px] w-[11px]" stroke="currentColor" strokeWidth="1.500"><path d="M0 1H12M3 6.500H12M0 12H12" /></svg></Box>
        </div>
      </div>
      <div className="flex h-[33px] items-center bg-[#343546] pb-[5px] pl-3.5">
        {darkMarks.map((m) => (
          <div key={m.t} className={`flex shrink-0 items-center ${m.s}`}>
            <Box c="mr-2 w-4">{m.i}</Box>
            <T c="text-[11.500px]">{m.t}</T>
          </div>
        ))}
      </div>
    </div>
  );
}

const Ticket = () => (
  <svg viewBox="0 0 22 15" className="h-[15px] w-[21px]" fill="currentColor"><path fillRule="evenodd" d="M2 0H20Q22 0 22 2V5Q20 5.500 20 7.500T22 10V13Q22 15 20 15H2Q0 15 0 13V10Q2 9.500 2 7.500T0 5V2Q0 0 2 0ZM4.500 3V12H17.500V3ZM6 4.300H16V10.700H6Z" /></svg>
);
const menu = [
  { t: "Tablero", i: <FaChartLine className="size-[19px]" /> },
  { t: "Tickets", i: <Ticket /> },
  { t: "Usuarios", i: <FaUsers className="size-[22px]" /> },
  { t: "Inventario", i: <FaClipboard className="size-[18px]" /> },
];

function Row({ h, a, b, c, d }) {
  const cell = "w-[259.300px] shrink-0 leading-6";
  return (
    <div className={`flex border-b border-[#dee2e6] ${h}`}>
      <div className={`${cell} font-bold`}><T>{a}</T></div>
      <div className={cell}><T>{b}</T></div>
      {c && <div className={`${cell} font-bold`}><T>{c}</T></div>}
      {d && <div className="leading-6"><T>{d}</T></div>}
    </div>
  );
}

function TicketApp() {
  return (
    <div className={`flex h-[629px] ${SOURCE}`}>
      <aside className="relative z-10 w-[250px] shrink-0 bg-linear-to-b/srgb from-[#5b5553] to-[#00a1dc] text-[#c5ccd3] shadow-[2px_0_5px_rgba(0,0,0,.35)]">
        <div className="flex h-[57px] border-b border-[#4b545c] bg-[#5b5553] pl-3.5 pt-2.5 text-[#dcdcdc]">
          <div className="flex size-[33px] items-center justify-center rounded-full bg-[#adb0b8] shadow-lg">
            <svg viewBox="0 0 30 22" className="h-5 w-[28px]"><path d="M1 6H7M0 9H6M1 12H7M23 6H29M24 9H30M23 12H29" stroke="#1787c4" strokeWidth="1.300" /><rect x="6.500" y="2" width="17" height="11" fill="#e6eef3" stroke="#1787c4" strokeWidth="1.500" /><circle cx="15" cy="7.500" r="4" fill="#14598a" /><path d="M13 13H17V17H21V20H9V17H13Z" fill="#1787c4" /></svg>
          </div>
          <div className="ml-[8px] flex flex-col items-center pt-[6px]">
            <T c="text-[18.200px] leading-6 tracking-[-0.3px]">INFORMATION</T>
            <T c="-mt-px text-[11.300px] leading-[14px] tracking-[-0.5px]">TECHNOLOGY</T>
          </div>
        </div>
        <div className="pl-5 pt-[12px]"><T c="text-[13px] leading-6 tracking-[-0.25px]">MENU</T></div>
        <div className="mt-[7px]">
          {menu.map((m) => (
            <div key={m.t} className="flex h-[43px] items-center pl-[25px]">
              <Box c="mr-[7px] w-[25px] pb-[3px]">{m.i}</Box>
              <T c="pb-px text-[14.300px]">{m.t}</T>
            </div>
          ))}
        </div>
      </aside>
      <div className="w-[1093px] bg-[#f4f6f9]">
        <header className="flex h-[57px] items-center border-b border-[#4b545c] bg-linear-to-r/srgb from-[#5b5553] to-[#00a1dc] pl-[24px] pr-6 text-[#d5d9dc]">
          <svg viewBox="0 0 15 14" className="h-[13px] w-[15px]" stroke="currentColor" strokeWidth="2.200"><path d="M0 1.500H15M0 6.700H15M0 12H15" /></svg>
          <div className="ml-auto mr-[37px] flex h-5 w-[18px] items-center justify-center rounded-[5px] bg-[#078a07]"><Plus c="size-[17px]" sw={4} /></div>
          <div className="flex size-[34px] justify-center rounded-full bg-[#1787c4]/50 shadow-[0_4px_6px_rgba(0,0,0,.3)]">
            <svg viewBox="0 0 34 34" className="size-[34px]" fill="none" strokeWidth="2.600"><circle cx="17" cy="9.500" r="8.300" stroke="#21e0a5" /><path d="M3 28Q5 18.500 17 18.500 29 18.500 31 28" stroke="#19c9cf" /></svg>
          </div>
          <T c="ml-[10px] text-[14.300px] tracking-[-0.04px]">Sistemas de Fersan</T>
        </header>
        <main className="ml-4 h-[539px] w-[1062px] rounded-b bg-white px-5 shadow-[0_0_2px_rgba(0,0,0,.3),0_1px_3px_rgba(0,0,0,.2)]">
          <svg viewBox="0 0 20 6" className="ml-[10px] h-[6px] w-5" fill="none" stroke="#000" strokeWidth="2.500"><path d="M1 0 6 4.500 10 1 14 4.500 19 0" /></svg>
          <div className="text-[14.200px] text-[#212529]">
            <Row h="h-[72px] pt-[8px]" a="Usuario:" b="Sistemas de Fersan" c="Categorias:" d={<>Solicitar Equipo&gt;Restablecimiento<br />Contraseña</>} />
            <Row h="h-[57px] pt-[17px]" a="Status:" b="Abierto" c="Prioridad:" d="Alto" />
            <Row h="h-[57px] pt-[17px]" a="Tema:" b="se callo el internet" c="Fecha de Creacion:" d="2022-10-14 21:11:15" />
            <Row h="h-[57px] pt-[17px]" a="Descripcion:" b="kkk" />
            <Row h="h-[57px] pt-[17px]" a="Archivos:" b="El usuario no Agrego ningun Archivo" />
          </div>
          <div className="ml-[7px] mr-[8px] mt-[41px]">
            <div className="h-[39px] rounded-t-[2px] border border-b-0 border-[#c4c4c4]"><EditorToolbar /></div>
            <div className="h-[95px] rounded-b-[2px] border border-[#3a7be0] pl-[9px] pt-[15px] shadow-[inset_2px_2px_3px_rgba(0,0,0,.1)]">
              <T c="text-[14.300px] leading-6 tracking-[0.04px] text-[#212529] underline decoration-[#ff0000] decoration-wavy decoration-[1px] underline-offset-2">jkdsfjsfjhkdsfhsfdkhjdsfhjkjkdsfdsf</T>
            </div>
            <div className="ml-auto flex h-[38px] w-[98px] items-center justify-center rounded bg-[#28a745] pb-0.5 text-white"><T c="text-[14.300px] font-medium tracking-[-0.2px]">Responder</T></div>
          </div>
        </main>
      </div>
      <div className="flex w-[17px] flex-col items-center bg-[#f1f1f1] pt-[7px]">
        <div className="size-0 border-x-4 border-b-4 border-x-transparent border-b-[#505050]" />
        <div className="mt-[75px] h-[494px] w-[13px] bg-[#c1c1c1]" />
        <div className="mb-[7px] mt-auto size-0 border-x-4 border-t-4 border-x-transparent border-t-[#505050]" />
      </div>
    </div>
  );
}

function Win10Taskbar() {
  return (
    <div className={`flex h-10 items-stretch bg-[#1b2024] text-white ${SEGOE}`}>
      <Box c="w-12"><svg viewBox="0 0 16 16" className="size-4" fill="#fff"><path d="M0 2.300 6.800 1.400V7.600H0ZM7.600 1.300 16 0V7.600H7.600ZM0 8.400H6.800V14.600L0 13.700ZM7.600 8.400H16V16L7.600 14.700Z" /></svg></Box>
      <Box c="w-12"><Search className="size-[17px] -scale-x-100" strokeWidth={1.7} /></Box>
      <Box c="w-12"><svg viewBox="0 0 16 16" className="size-4" fill="none" stroke="#fff" strokeWidth="1.100"><path d="M1 0V2.500H11V0M1 4.500H11V11.500H1ZM1 16V13.500H11V16M14.500 0V3M14.500 8V16M13.500 5H15.500" /></svg></Box>
      <div className="ml-[7px] flex w-10 items-center justify-center border-b-2 border-[#76b9ed]"><Folder c="h-5 w-[22px]" /></div>
      <Box c="ml-[9px] w-10"><svg viewBox="0 0 22 20" className="h-[19px] w-[22px]"><path d="M1 5 8 2V16L1 17Z" fill="#9aa0a6" /><rect x="6" y="1" width="15" height="12" fill="#e4e8ea" stroke="#a7adb2" /><path d="M8 9H10L12 4 14 10 16 6 19 9" stroke="#2a86d4" fill="none" /><path d="M11 13H16L18 18H9Z" fill="#c2c6c9" /></svg></Box>
      <Box c="ml-[9px] w-10"><FaSpotify className="size-[22px] text-[#1ed760]" /></Box>
      <div className="ml-[5px] flex w-[44px] items-center justify-center border-b-2 border-[#76b9ed] bg-[#4a4e50]"><Brave c="h-[23px] w-5" /></div>
      <div className="w-1 border-b-2 border-[#76b9ed] bg-[#363b3e]" />
      <div className="ml-[5px] flex w-10 items-center justify-center border-b-2 border-[#76b9ed]"><VsCode c="size-6" /></div>
      <div className="ml-auto flex items-center text-[11px]">
        <svg viewBox="0 0 24 24" className="size-[23px]"><defs><linearGradient id="moon" x1="0" y1="0" x2="0" y2="1"><stop stopColor="#f7cf4a" /><stop offset="1" stopColor="#ef7d22" /></linearGradient></defs><path d="M15 0A12 12 0 1 1 1 16Q10 19 14 12 17 6 15 0Z" fill="url(#moon)" /></svg>
        <T c="ml-2 text-[13px]">18°C</T>
        <T c="ml-[9px] text-[13px] tracking-[0.06px]">Despejado</T>
        <Chevron up c="ml-[25px] h-[7px] w-3" sw={1.3} />
        <svg viewBox="0 0 14 16" className="ml-3 h-4 w-3.5" fill="none" stroke="#fff" strokeWidth="1.200"><rect x="2" y="4" width="7.500" height="8" rx="1" /><path d="M9.500 7 12 5.500V10.500L9.500 9M3 1.500Q6 0 9 1.500M3 14.500Q6 16 9 14.500" /></svg>
        <svg viewBox="0 0 16 14" className="ml-[9px] h-3.5 w-4" fill="none" stroke="#fff" strokeWidth="1.200"><path d="M5 2H15.500V10H4V6M1 1H5V5H1ZM3 5V13M9.500 10V13M6 13H13" /></svg>
        <svg viewBox="0 0 17 14" className="ml-2 h-3.5 w-[17px]" fill="none" stroke="#fff" strokeWidth="1.200"><path d="M1 5H3.500L7 2V12L3.500 9H1ZM9 5Q10.500 7 9 9M11.200 3.500Q13.500 7 11.200 10.500M13.500 2Q17 7 13.500 12" /></svg>
        <div className="ml-[10px] flex w-[60px] flex-col items-center leading-[18px]"><T>11:02 p. m.</T><T>14/10/2022</T></div>
        <svg viewBox="0 0 16 16" className="ml-[15px] size-4" fill="none" stroke="#fff" strokeWidth="1.300"><path d="M1 1H15V12H10L8 14.500 6 12H1Z" /></svg>
        <div className="ml-5 mr-[4px] h-10 w-px bg-[#55595c]" />
      </div>
    </div>
  );
}

export default function App() {
  return (
    <div className="flex h-[900px] w-[2800px] overflow-hidden bg-white">
      <VideoPlayer />
      <div className="w-[1360px] shrink-0">
        <DarkChrome />
        <TicketApp />
        <Win10Taskbar />
      </div>
    </div>
  );
}
